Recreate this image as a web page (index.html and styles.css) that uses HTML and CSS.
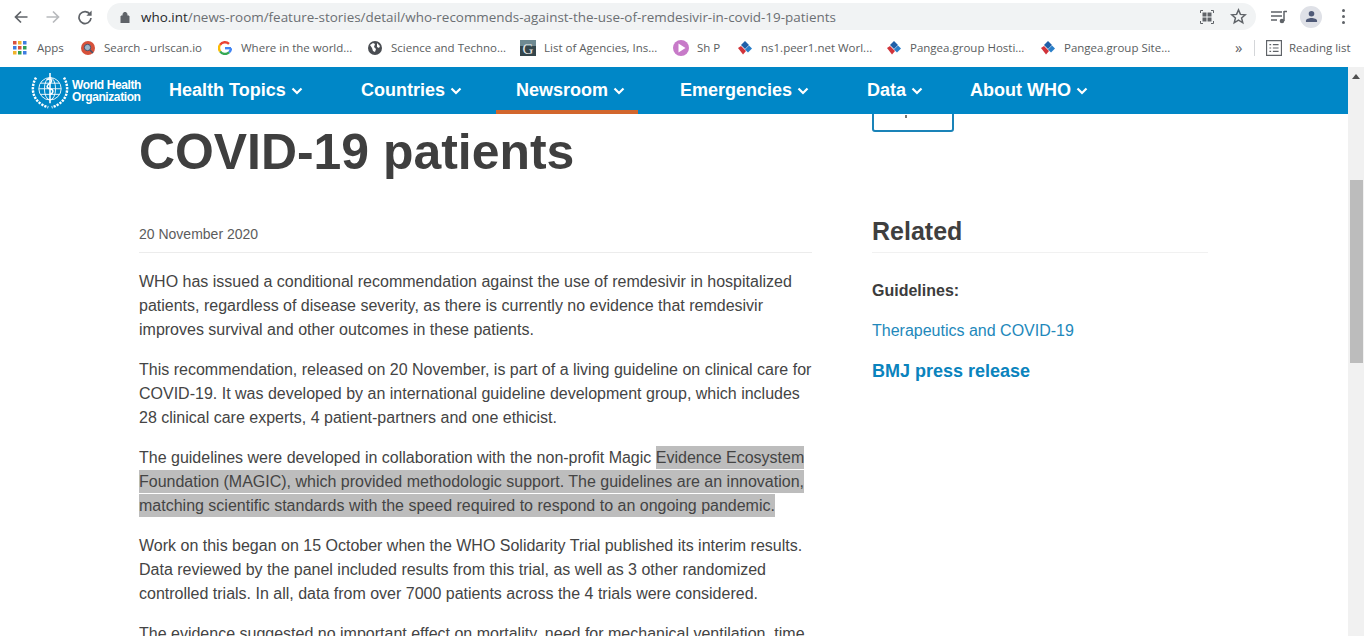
FILE: index.html
```html
<!DOCTYPE html>
<html>
<head>
  <title>WHO recommends against the use of remdesivir in COVID-19 patients</title>
  <link rel="stylesheet" href="styles.css">
</head>
<body>
  <!-- Browser toolbar -->
  <div class="toolbar">
    <svg class="tool-icon back" viewBox="0 0 16 16"><path d="M14.5 8H2.5M8 2.5 2.5 8 8 13.5" fill="none" stroke="#5f6368" stroke-width="1.7"/></svg>
    <svg class="tool-icon forward" viewBox="0 0 16 16"><path d="M1.5 8H13.5M8 2.5 13.5 8 8 13.5" fill="none" stroke="#b8babd" stroke-width="1.7"/></svg>
    <svg class="tool-icon reload" viewBox="0 0 16 16"><path d="M13 5.2A6 6 0 1 0 14 9" fill="none" stroke="#5f6368" stroke-width="1.7"/><path d="M14.6 1.6V6.8H9.4Z" fill="#5f6368"/></svg>
    <div class="omnibox">
      <svg class="lock" viewBox="0 0 10 12"><path d="M1 5h8v7H1zM3 5V3.4a2 2 0 0 1 4 0V5" fill="#5f6368" stroke="#5f6368"/></svg>
      <span class="url"><span class="url-host">who.int</span>/news-room/feature-stories/detail/who-recommends-against-the-use-of-remdesivir-in-covid-19-patients</span>
      <svg class="omni-icon qr" viewBox="0 0 14 14"><path d="M.5 3V.5H3M11 .5h2.500V3M13.500 11v2.500H11M3 13.500H.5V11" fill="none" stroke="#5f6368"/><path d="M2.500 2.500h4v4h-4zM7.500 2.500h4v4h-4zM2.500 7.500h4v4h-4zM7.500 7.500h4v4h-4z" fill="#5f6368"/></svg>
      <svg class="omni-icon star" viewBox="0 0 16 16"><path d="M8 1.800 9.800 6l4.600.4-3.500 3 1.100 4.500L8 11.500l-4 2.400 1.100-4.500-3.500-3L6.200 6Z" fill="none" stroke="#5f6368" stroke-width="1.400"/></svg>
    </div>
    <svg class="media-icon" viewBox="0 0 16 14"><path d="M0 2h11M0 6h11M0 10h6" fill="none" stroke="#5f6368" stroke-width="1.500"/><path d="M13 1.500h3M13 1v10" fill="none" stroke="#5f6368" stroke-width="1.500"/><circle cx="11" cy="11" r="2.300" fill="#5f6368"/></svg>
    <div class="avatar">
      <svg viewBox="0 0 14 14"><circle cx="7" cy="4" r="3" fill="#4f5a78"/><path d="M1 13v-1.500C1 9.500 4.500 8.500 7 8.500s6 1 6 3V13Z" fill="#4f5a78"/></svg>
    </div>
    <div class="kebab"><i></i><i></i><i></i></div>
  </div>

  <!-- Bookmarks bar -->
  <div class="bookmarks">
    <div class="bookmark-list">
      <span class="bookmark">
        <svg viewBox="0 0 14 14"><g><path d="M0 0h3.500v3.500H0z" fill="#d9503f"/><path d="M5 0h3.500v3.500H5z" fill="#f1b32b"/><path d="M10 0h3.500v3.500H10z" fill="#3d7de0"/><path d="M0 5h3.500v3.500H0z" fill="#3d7de0"/><path d="M5 5h3.500v3.500H5z" fill="#d9503f"/><path d="M10 5h3.500v3.500H10z" fill="#2f9e55"/><path d="M0 10h3.500v3.500H0z" fill="#f1b32b"/><path d="M5 10h3.500v3.500H5z" fill="#2f9e55"/><path d="M10 10h3.500v3.500H10z" fill="#3d7de0"/></g></svg>
        Apps
      </span>
      <span class="bookmark">
        <svg viewBox="0 0 14 14"><circle cx="7" cy="7" r="7" fill="#d6513a"/><circle cx="6.500" cy="6.500" r="3.200" fill="#9db6c9" stroke="#44506a"/><path d="M9 9l3 3" stroke="#44506a" stroke-width="1.500"/></svg>
        Search - urlscan.io
      </span>
      <span class="bookmark">
        <svg viewBox="0 0 14 14"><path d="M13 7.200H7" fill="none" stroke="#4285f4" stroke-width="2.400"/><path d="M13 7.200A6 6 0 0 1 11 11.400" fill="none" stroke="#4285f4" stroke-width="2.400"/><path d="M11 11.400A6 6 0 0 1 2.100 10.400" fill="none" stroke="#34a853" stroke-width="2.400"/><path d="M2.100 10.400A6 6 0 0 1 2.100 3.700" fill="none" stroke="#fbbc05" stroke-width="2.400"/><path d="M2.100 3.700A6 6 0 0 1 11 2.800" fill="none" stroke="#ea4335" stroke-width="2.400"/></svg>
        Where in the world...
      </span>
      <span class="bookmark">
        <svg viewBox="0 0 14 14"><circle cx="7" cy="7" r="7" fill="#4a4d52"/><path d="M2 4l3-2 2 1-1 3 2 2-1 3-2-1-1-3ZM9 2l3 3-1 2-2-1Z" fill="#fff"/></svg>
        Science and Techno...
      </span>
      <span class="bookmark">
        <svg class="icon-large" viewBox="0 0 16 16"><path d="M0 0h16v16H0z" fill="#35464c"/><path d="M0 0h16v6H0z" fill="#6f8a92"/><text class="favicon-letter" x="8" y="13.500">G</text></svg>
        List of Agencies, Ins...
      </span>
      <span class="bookmark">
        <svg class="icon-large" viewBox="0 0 16 16"><circle cx="8" cy="8" r="8" fill="#c77ac8"/><path d="M5.500 3.500v9l7-4.500Z" fill="#fff"/></svg>
        Sh P
      </span>
      <span class="bookmark">
        <svg class="icon-large" viewBox="0 0 16 16"><path d="M8 1l4 4-4 4-4-4Z" fill="#1f5fa8"/><path d="M12 5.500l3 3-4 4-3-3Z" fill="#2a7fc9"/><path d="M1 8l3-2 5 5-3 3.500Z" fill="#d1333a"/></svg>
        ns1.peer1.net Worl...
      </span>
      <span class="bookmark">
        <svg class="icon-large" viewBox="0 0 16 16"><path d="M8 1l4 4-4 4-4-4Z" fill="#1f5fa8"/><path d="M12 5.500l3 3-4 4-3-3Z" fill="#2a7fc9"/><path d="M1 8l3-2 5 5-3 3.500Z" fill="#d1333a"/></svg>
        Pangea.group Hosti...
      </span>
      <span class="bookmark">
        <svg class="icon-large" viewBox="0 0 16 16"><path d="M8 1l4 4-4 4-4-4Z" fill="#1f5fa8"/><path d="M12 5.500l3 3-4 4-3-3Z" fill="#2a7fc9"/><path d="M1 8l3-2 5 5-3 3.500Z" fill="#d1333a"/></svg>
        Pangea.group Site...
      </span>
    </div>
    <span class="more">&raquo;</span>
    <span class="bar-sep"></span>
    <span class="bookmark reading">
      <svg class="icon-large" viewBox="0 0 14 14"><path d="M.5.5h13v13H.5z" fill="none" stroke="#5f6368"/><path d="M3 4h1.500M6 4h5M3 7h1.500M6 7h5M3 10h1.500M6 10h5" stroke="#5f6368"/></svg>
      Reading list
    </span>
  </div>

  <div class="viewport">
    <div class="page">
      <!-- Site nav -->
      <nav class="site-nav">
        <div class="logo">
          <svg class="emblem" viewBox="0 0 34 34">
            <g fill="none" stroke="#fff" stroke-width=".8">
              <circle cx="17" cy="15" r="10"/>
              <ellipse cx="17" cy="15" rx="5" ry="10"/>
              <path d="M7 15h20M8.500 10h17M8.500 20h17"/>
            </g>
            <path d="M17 1v27" stroke="#fff" stroke-width="1.400"/>
            <path d="M14 7c4-2 6 1 3 3s-4 4 0 5 3 4 0 5" fill="none" stroke="#fff" stroke-width="1.300"/>
            <g fill="none" stroke="#fff" stroke-width="2.200" stroke-dasharray="2 1">
              <path d="M4.500 5C-1.500 15 2 28 15.500 31.500"/>
              <path d="M29.500 5c6 10 2.500 23-11 26.500"/>
            </g>
          </svg>
          <div class="logo-text">World Health<br>Organization</div>
        </div>
        <div class="nav-items">
          <a class="nav-item">Health Topics <svg class="chevron" viewBox="0 0 12 8"><path d="M1.500 1.500 6 6l4.500-4.500" /></svg></a>
          <a class="nav-item">Countries <svg class="chevron" viewBox="0 0 12 8"><path d="M1.500 1.500 6 6l4.500-4.500" /></svg></a>
          <a class="nav-item active">Newsroom <svg class="chevron" viewBox="0 0 12 8"><path d="M1.500 1.500 6 6l4.500-4.500" /></svg></a>
          <a class="nav-item">Emergencies <svg class="chevron" viewBox="0 0 12 8"><path d="M1.500 1.500 6 6l4.500-4.500" /></svg></a>
          <a class="nav-item">Data <svg class="chevron" viewBox="0 0 12 8"><path d="M1.500 1.500 6 6l4.500-4.500" /></svg></a>
          <a class="nav-item">About WHO <svg class="chevron" viewBox="0 0 12 8"><path d="M1.500 1.500 6 6l4.500-4.500" /></svg></a>
        </div>
      </nav>

      <div class="content">
        <article class="article">
          <h1 class="title">COVID-19 patients</h1>
          <div class="date">20 November 2020</div>
          <p>WHO has issued a conditional recommendation against the use of remdesivir in hospitalized patients, regardless of disease severity, as there is currently no evidence that remdesivir improves survival and other outcomes in these patients.</p>
          <p>This recommendation, released on 20 November, is part of a living guideline on clinical care for COVID-19. It was developed by an international guideline development group, which includes 28 clinical care experts, 4 patient-partners and one ethicist.</p>
          <p>The guidelines were developed in collaboration with the non-profit Magic <span class="selected">Evidence Ecosystem Foundation (MAGIC), which provided methodologic support. The guidelines are an innovation, matching scientific standards with the speed required to respond to an ongoing pandemic.</span></p>
          <p>Work on this began on 15 October when the WHO Solidarity Trial published its interim results. Data reviewed by the panel included results from this trial, as well as 3 other randomized controlled trials. In all, data from over 7000 patients across the 4 trials were considered.</p>
          <p>The evidence suggested no important effect on mortality, need for mechanical ventilation, time to clinical improvement, and other patient-important outcomes.</p>
        </article>
        <aside class="sidebar">
          <div class="share-btn"></div>
          <h2 class="related">Related</h2>
          <div class="guidelines">Guidelines:</div>
          <a class="side-link">Therapeutics and COVID-19</a>
          <a class="side-link-bold">BMJ press release</a>
        </aside>
      </div>
    </div>

    <!-- Scrollbar -->
    <div class="scrollbar">
      <svg class="scroll-arrow" viewBox="0 0 8 5"><path d="M4 0 8 5H0Z" fill="#505050"/></svg>
      <div class="scroll-thumb"></div>
    </div>
  </div>
</body>
</html>
```

FILE: styles.css
```css
/* Page frame */
html, body {
  margin: 0;
  height: 636px;
  overflow: hidden;
}
body {
  display: flex;
  flex-direction: column;
  background: #fff;
  font-family: "Liberation Sans", Arial, sans-serif;
  color: #444;
}

/* Browser toolbar */
.toolbar {
  height: 33px;
  display: flex;
  align-items: center;
  flex-shrink: 0;
}
.tool-icon {
  width: 16px;
  height: 16px;
}
.back { margin-left: 13px; }
.forward { margin-left: 16px; }
.reload { margin-left: 16px; }
.omnibox {
  margin-left: 14px;
  width: 1149px;
  height: 27px;
  border-radius: 14px;
  background: #f1f3f4;
  display: flex;
  align-items: center;
}
.lock {
  width: 10px;
  height: 12px;
  margin-left: 13px;
}
.url {
  margin-left: 11px;
  font-family: "Open Sans", sans-serif;
  font-size: 13.45px;
  color: #6b6f73;
  flex: 1;
  white-space: nowrap;
}
.url-host { color: #26282b; }
.omni-icon {
  width: 14px;
  height: 14px;
}
.star {
  width: 17px;
  height: 17px;
  margin: 0 9px 0 16px;
}
.media-icon {
  width: 16px;
  height: 14px;
  margin-left: 15px;
}
.avatar {
  width: 22px;
  height: 22px;
  margin-left: 13px;
  border-radius: 50%;
  background: #dfe1e7;
  display: flex;
  align-items: center;
  justify-content: center;
}
.avatar svg {
  width: 13px;
  height: 13px;
}
.kebab {
  margin-left: 20px;
  display: flex;
  flex-direction: column;
  gap: 3px;
}
.kebab i {
  display: block;
  width: 3px;
  height: 3px;
  border-radius: 50%;
  background: #5f6368;
}

/* Bookmarks */
.bookmarks {
  height: 29px;
  padding-bottom: 5px;
  display: flex;
  align-items: center;
  flex-shrink: 0;
  font-family: "Open Sans", sans-serif;
  font-size: 11.5px;
  color: #5a5d60;
}
.bookmark-list {
  width: 1236px;
  margin-left: 13px;
  display: grid;
  grid-template-columns: 68px 137px 150px 152px 153px 64px 149px 154px 1fr;
  align-items: center;
}
.bookmark {
  display: flex;
  align-items: center;
  gap: 9px;
  white-space: nowrap;
}
.bookmark:first-child {
  gap: 10px;
}
.bookmark svg {
  width: 14px;
  height: 14px;
  flex-shrink: 0;
}
.bookmark .icon-large {
  width: 16px;
  height: 16px;
  margin-right: -1px;
}
.favicon-letter {
  font-family: "Liberation Serif", serif;
  font-size: 15px;
  fill: #e8e8e8;
  text-anchor: middle;
}
.more {
  margin-left: -14px;
  font-size: 15px;
  line-height: 15px;
  color: #5f6368;
  width: 14px;
}
.bar-sep {
  width: 1px;
  height: 16px;
  margin-left: 5px;
  background: #d4d6d9;
}
.reading {
  margin-left: 11px;
  gap: 8px;
}

/* Page area */
.viewport {
  flex: 1;
  display: flex;
  min-height: 0;
}
.page {
  flex: 1;
  min-width: 0;
  overflow: hidden;
}
.scrollbar {
  width: 16px;
  background: #f1f1f1;
  display: flex;
  flex-direction: column;
  align-items: center;
}
.scroll-arrow {
  width: 8px;
  height: 5px;
  margin-top: 7px;
  flex-shrink: 0;
}
.scroll-thumb {
  align-self: stretch;
  margin: 101px 1px 0 2px;
  height: 183px;
  background: #bcbcbc;
}

/* Site nav */
.site-nav {
  height: 47px;
  background: #0087c7;
  display: flex;
  position: relative;
  z-index: 1;
}
.logo {
  width: 149px;
  padding-left: 31px;
  box-sizing: border-box;
  display: flex;
  align-items: center;
  gap: 3px;
  flex-shrink: 0;
}
.emblem {
  width: 38px;
  height: 38px;
  flex-shrink: 0;
}
.logo-text {
  color: #fff;
  font-size: 12px;
  line-height: 12px;
  font-weight: bold;
  letter-spacing: -0.4px;
  white-space: nowrap;
  padding-top: 1px;
}
.nav-items {
  flex: 1;
  display: grid;
  grid-template-columns: 192px 155px 164px 187px 103px 1fr;
}
.nav-item {
  align-self: stretch;
  justify-self: start;
  padding: 0 12px 1px 20px;
  display: flex;
  align-items: center;
  gap: 5px;
  color: #fff;
  font-size: 18px;
  font-weight: bold;
  white-space: nowrap;
  box-sizing: border-box;
}
.nav-item.active {
  border-bottom: 4px solid #d2662d;
  padding: 3px 13px 0 20px;
}
.chevron {
  width: 12px;
  height: 8px;
  margin-top: 2px;
  fill: none;
  stroke: #fff;
  stroke-width: 2.200;
}

/* Content */
.content {
  display: flex;
  padding-left: 139px;
}
.article {
  width: 673px;
  font-size: 16px;
  line-height: 24px;
}
.title {
  margin: 12px 0 0;
  font-size: 49.9px;
  line-height: 52px;
  font-weight: bold;
  color: #3f3f3f;
}
.date {
  margin-top: 46px;
  margin-bottom: 17px;
  padding-bottom: 8px;
  font-size: 14px;
  line-height: 20px;
  color: #5c5c5c;
  border-bottom: 1px solid #ececec;
}
.article p {
  margin: 16px 0;
}
.selected {
  background: #bdbdbd;
  padding: 3px 0;
}
.sidebar {
  margin-left: 60px;
  width: 336px;
  display: flex;
  flex-direction: column;
  align-items: flex-start;
}
.share-btn {
  width: 78px;
  height: 60px;
  margin-top: -46px;
  border: 2px solid #1a83b8;
  border-radius: 3px;
}
.share-btn::before {
  content: "";
  display: block;
  width: 2px;
  height: 3px;
  margin: 45px 0 0 31px;
  background: #777;
}
.related {
  align-self: stretch;
  margin: 83px 0 0;
  padding-bottom: 5px;
  font-size: 25px;
  line-height: 32px;
  font-weight: bold;
  color: #3f3f3f;
  border-bottom: 1px solid #f1f1f1;
}
.guidelines {
  margin-top: 26px;
  font-size: 16px;
  line-height: 24px;
  font-weight: bold;
  color: #3c3c3c;
}
.side-link {
  margin-top: 16px;
  font-size: 16px;
  line-height: 24px;
  color: #2288bb;
}
.side-link-bold {
  margin-top: 16px;
  font-size: 18px;
  line-height: 24px;
  font-weight: bold;
  color: #0a83bd;
}
```
